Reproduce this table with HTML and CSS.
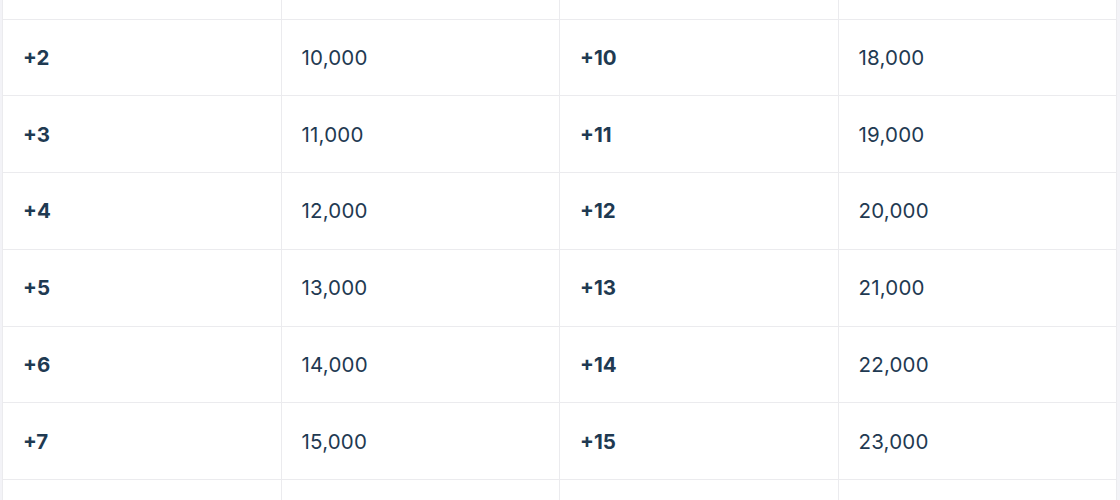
FILE: index.html
```html
<!DOCTYPE html>
<html>
<head>
<meta charset="utf-8">
<link rel="stylesheet" href="styles.css">
</head>
<body>
<div class="frame">
  <table class="levels">
    <tbody>
      <tr class="partial"><td></td><td></td><td></td><td></td></tr>
      <tr><td class="lvl">+2</td><td class="val">10,000</td><td class="lvl">+10</td><td class="val">18,000</td></tr>
      <tr><td class="lvl">+3</td><td class="val">11,000</td><td class="lvl">+11</td><td class="val">19,000</td></tr>
      <tr><td class="lvl">+4</td><td class="val">12,000</td><td class="lvl">+12</td><td class="val">20,000</td></tr>
      <tr><td class="lvl">+5</td><td class="val">13,000</td><td class="lvl">+13</td><td class="val">21,000</td></tr>
      <tr><td class="lvl">+6</td><td class="val">14,000</td><td class="lvl">+14</td><td class="val">22,000</td></tr>
      <tr><td class="lvl">+7</td><td class="val">15,000</td><td class="lvl">+15</td><td class="val">23,000</td></tr>
      <tr class="partial"><td></td><td></td><td></td><td></td></tr>
    </tbody>
  </table>
</div>
</body>
</html>
```
FILE: styles.css
```css
html, body {
  margin: 0;
  padding: 0;
  background: #f3f3f7;
  overflow: hidden;
}
.frame {
  padding: 0 3px 0 2px;
  height: 500px;
  overflow: hidden;
}
.levels {
  width: 1115px;
  border-collapse: collapse;
  table-layout: fixed;
  background: #ffffff;
  font-family: Inter, "Noto Sans", sans-serif;
  font-size: 20.5px;
  color: #1f3a52;
}
.levels td {
  border: 1px solid #ebebee;
  height: 76.8px;
  padding: 0 0 0 20px;
  vertical-align: middle;
  box-sizing: border-box;
}
.levels tr:first-child td {
  border-top: none;
}
.levels tr.partial:first-child td {
  height: 19px;
}
.levels tr.partial:last-child td {
  height: 40px;
}
.lvl {
  font-weight: 700;
}
.val {
  font-weight: 400;
  letter-spacing: 0.2px;
}
```
